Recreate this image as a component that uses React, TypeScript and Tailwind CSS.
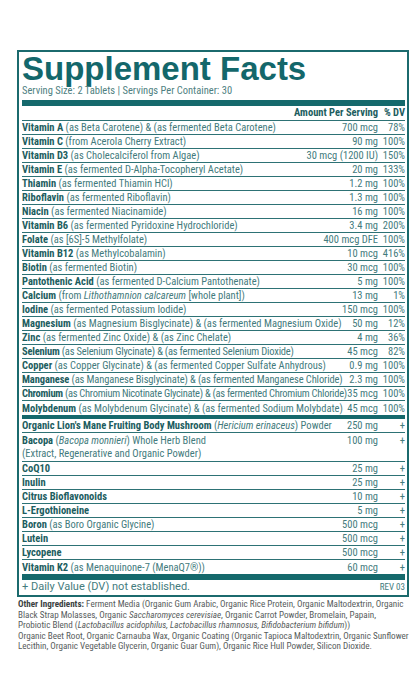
import React from "react";

type RowProps = {
  name: string;
  desc?: React.ReactNode;
  amount: string;
  dv: string;
  last?: boolean;
  cls?: string;
};

function Row({ name, desc, amount, dv, last, cls }: RowProps) {
  return (
    <div className={`flex items-center h-[14px] leading-[13px] ${last ? "" : "border-b border-[#2d7275]"}`}>
      <div className={`flex-1 min-w-0 whitespace-nowrap ${cls ?? ""}`}>
        <span className="font-bold text-[#1c5d60]">{name}</span>
        {desc ? <span className="text-[#447b7d]"> {desc}</span> : null}
      </div>
      <div className="shrink-0 text-right whitespace-nowrap text-[#447b7d] ml-[3px]">{amount}</div>
      <div className="shrink-0 w-[27px] text-right text-[#447b7d]">{dv}</div>
    </div>
  );
}

const vitamins: RowProps[] = [
  { name: "Vitamin A", desc: "(as Beta Carotene) & (as fermented Beta Carotene)", amount: "700 mcg", dv: "78%" },
  { name: "Vitamin C", desc: "(from Acerola Cherry Extract)", amount: "90 mg", dv: "100%" },
  { name: "Vitamin D3", desc: "(as Cholecalciferol from Algae)", amount: "30 mcg (1200 IU)", dv: "150%" },
  { name: "Vitamin E", desc: "(as fermented D-Alpha-Tocopheryl Acetate)", amount: "20 mg", dv: "133%" },
  { name: "Thiamin", desc: "(as fermented Thiamin HCl)", amount: "1.2 mg", dv: "100%" },
  { name: "Riboflavin", desc: "(as fermented Riboflavin)", amount: "1.3 mg", dv: "100%" },
  { name: "Niacin", desc: "(as fermented Niacinamide)", amount: "16 mg", dv: "100%" },
  { name: "Vitamin B6", desc: "(as fermented Pyridoxine Hydrochloride)", amount: "3.4 mg", dv: "200%" },
  { name: "Folate", desc: "(as [6S]-5 Methylfolate)", amount: "400 mcg DFE", dv: "100%" },
  { name: "Vitamin B12", desc: "(as Methylcobalamin)", amount: "10 mcg", dv: "416%" },
  { name: "Biotin", desc: "(as fermented Biotin)", amount: "30 mcg", dv: "100%" },
  { name: "Pantothenic Acid", desc: "(as fermented D-Calcium Pantothenate)", amount: "5 mg", dv: "100%" },
  {
    name: "Calcium",
    desc: (
      <>
        (from <i>Lithothamnion calcareum</i> [whole plant])
      </>
    ),
    amount: "13 mg",
    dv: "1%",
  },
  { name: "Iodine", desc: "(as fermented Potassium Iodide)", amount: "150 mcg", dv: "100%" },
  { name: "Magnesium", desc: "(as Magnesium Bisglycinate) & (as fermented Magnesium Oxide)", amount: "50 mg", dv: "12%" },
  { name: "Zinc", desc: "(as fermented Zinc Oxide) & (as Zinc Chelate)", amount: "4 mg", dv: "36%" },
  { name: "Selenium", desc: "(as Selenium Glycinate) & (as fermented Selenium Dioxide)", amount: "45 mcg", dv: "82%", cls: "tracking-[-0.2px]" },
  { name: "Copper", desc: "(as Copper Glycinate) & (as fermented Copper Sulfate Anhydrous)", amount: "0.9 mg", dv: "100%" },
  { name: "Manganese", desc: "(as Manganese Bisglycinate) & (as fermented Manganese Chloride)", amount: "2.3 mg", dv: "100%", cls: "tracking-[-0.12px]" },
  { name: "Chromium", desc: "(as Chromium Nicotinate Glycinate) & (as fermented Chromium Chloride)", amount: "35 mcg", dv: "100%", cls: "tracking-[-0.28px]" },
  { name: "Molybdenum", desc: "(as Molybdenum Glycinate) & (as fermented Sodium Molybdate)", amount: "45 mcg", dv: "100%" },
];

const others: RowProps[] = [
  { name: "CoQ10", amount: "25 mg", dv: "+" },
  { name: "Inulin", amount: "25 mg", dv: "+" },
  { name: "Citrus Bioflavonoids", amount: "10 mg", dv: "+" },
  { name: "L-Ergothioneine", amount: "5 mg", dv: "+" },
  { name: "Boron", desc: "(as Boro Organic Glycine)", amount: "500 mcg", dv: "+" },
  { name: "Lutein", amount: "500 mcg", dv: "+" },
  { name: "Lycopene", amount: "500 mcg", dv: "+" },
  { name: "Vitamin K2", desc: "(as Menaquinone-7 (MenaQ7®))", amount: "60 mcg", dv: "+" },
];

export default function App() {
  return (
    <div className="w-[419px] h-[700px] bg-white pt-[50px] [font-family:Roboto,'Liberation_Sans',sans-serif] [font-stretch:75%]">
      <div className="ml-[17px] w-[392px] border-2 border-[#1b6a6d] pl-[3px] pr-[2px] text-[10.5px]">
        <div className="text-[33px] leading-[33px] font-bold text-[#13676b] [font-family:'Liberation_Sans',Arial,sans-serif] [font-stretch:100%]">
          Supplement Facts
        </div>
        <div className="text-[10.5px] leading-[12px] text-[#4f7f81]">
          Serving Size: 2 Tablets | Servings Per Container: 30
        </div>
        <div className="mt-[3px] h-[6px] bg-[#15696c]" />
        <div className="flex justify-end items-center h-[15px] border-b border-[#2d7275] font-bold text-[#1c5d60]">
          <span>Amount Per Serving</span>
          <span className="w-[27px] text-right">% DV</span>
        </div>
        {vitamins.map((r, i) => (
          <Row key={r.name} {...r} last={i === vitamins.length - 1} />
        ))}
        <div className="h-[4px] bg-[#15696c]" />
        <Row
          name="Organic Lion's Mane Fruiting Body Mushroom"
          desc={
            <>
              (<i>Hericium erinaceus</i>) Powder
            </>
          }
          amount="250 mg"
          dv="+"
        />
        <div className="flex items-start leading-[13px] py-[1px] border-b border-[#2d7275]">
          <div className="flex-1 min-w-0">
            <span className="font-bold text-[#1c5d60]">Bacopa</span>
            <span className="text-[#447b7d]">
              {" "}
              (<i>Bacopa monnieri</i>) Whole Herb Blend
              <br />
              (Extract, Regenerative and Organic Powder)
            </span>
          </div>
          <div className="shrink-0 text-right text-[#447b7d]">100 mg</div>
          <div className="shrink-0 w-[27px] text-right text-[#447b7d]">+</div>
        </div>
        {others.map((r, i) => (
          <Row key={r.name} {...r} last={i === others.length - 1} />
        ))}
        <div className="h-[6px] bg-[#15696c]" />
        <div className="flex items-center justify-between h-[15px] text-[#447b7d]">
          <span className="text-[11px] [font-stretch:100%]">+ Daily Value (DV) not established.</span>
          <span className="text-[9px]">REV 03</span>
        </div>
      </div>
      <p className="ml-[18px] w-[395px] mt-[2px] text-[9.1px] leading-[10.5px] text-[#575c5c] whitespace-nowrap">
        <b className="text-[#3a3f3f]">Other Ingredients:</b> Ferment Media (Organic Gum Arabic, Organic Rice Protein,
        Organic Maltodextrin, Organic
        <br />
        Black Strap Molasses, Organic <i>Saccharomyces cerevisiae</i>, Organic Carrot Powder, Bromelain, Papain,
        <br />
        Probiotic Blend (<i>Lactobacillus acidophilus, Lactobacillus rhamnosus, Bifidobacterium bifidum</i>))
        <br />
        Organic Beet Root, Organic Carnauba Wax, Organic Coating (Organic Tapioca Maltodextrin, Organic Sunflower
        <br />
        Lecithin, Organic Vegetable Glycerin, Organic Guar Gum), Organic Rice Hull Powder, Silicon Dioxide.
      </p>
    </div>
  );
}
